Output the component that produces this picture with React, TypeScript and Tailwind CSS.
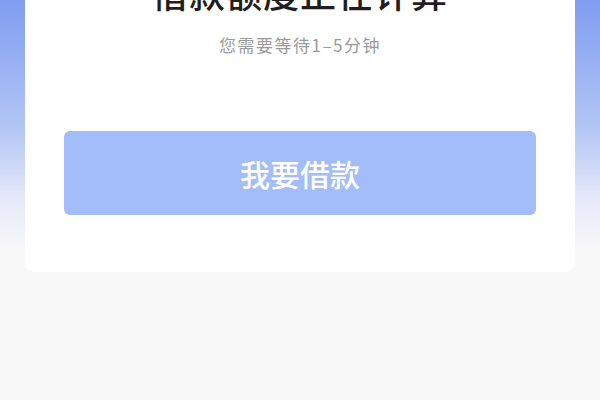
export default function App() {
  return (
    <div
      className="h-[400px] w-full overflow-hidden bg-[linear-gradient(180deg,#7f9df1_0px,#b4c6f5_130px,#e6e9f8_200px,#f8f8f8_250px)]"
      style={{ fontFamily: '"Noto Sans CJK SC", "Noto Sans", sans-serif' }}
    >
      <div className="mx-[25px] flex h-[272px] flex-col items-center rounded-b-[10px] bg-white px-[39px]">
        <h1 className="-mt-[26px] text-[36px] font-medium leading-[36px] tracking-[1px] text-[#1f1f1f]">
          借款额度正在计算
        </h1>
        <p className="mt-[24px] text-[17px] leading-[22px] tracking-[1.5px] text-[#9a9a9a]">
          您需要等待1–5分钟
        </p>
        <button className="mt-[75px] flex h-[84px] w-full items-center justify-center rounded-[6px] bg-[#a2bdf7] text-[30px] font-medium text-white">
          我要借款
        </button>
      </div>
    </div>
  );
}
